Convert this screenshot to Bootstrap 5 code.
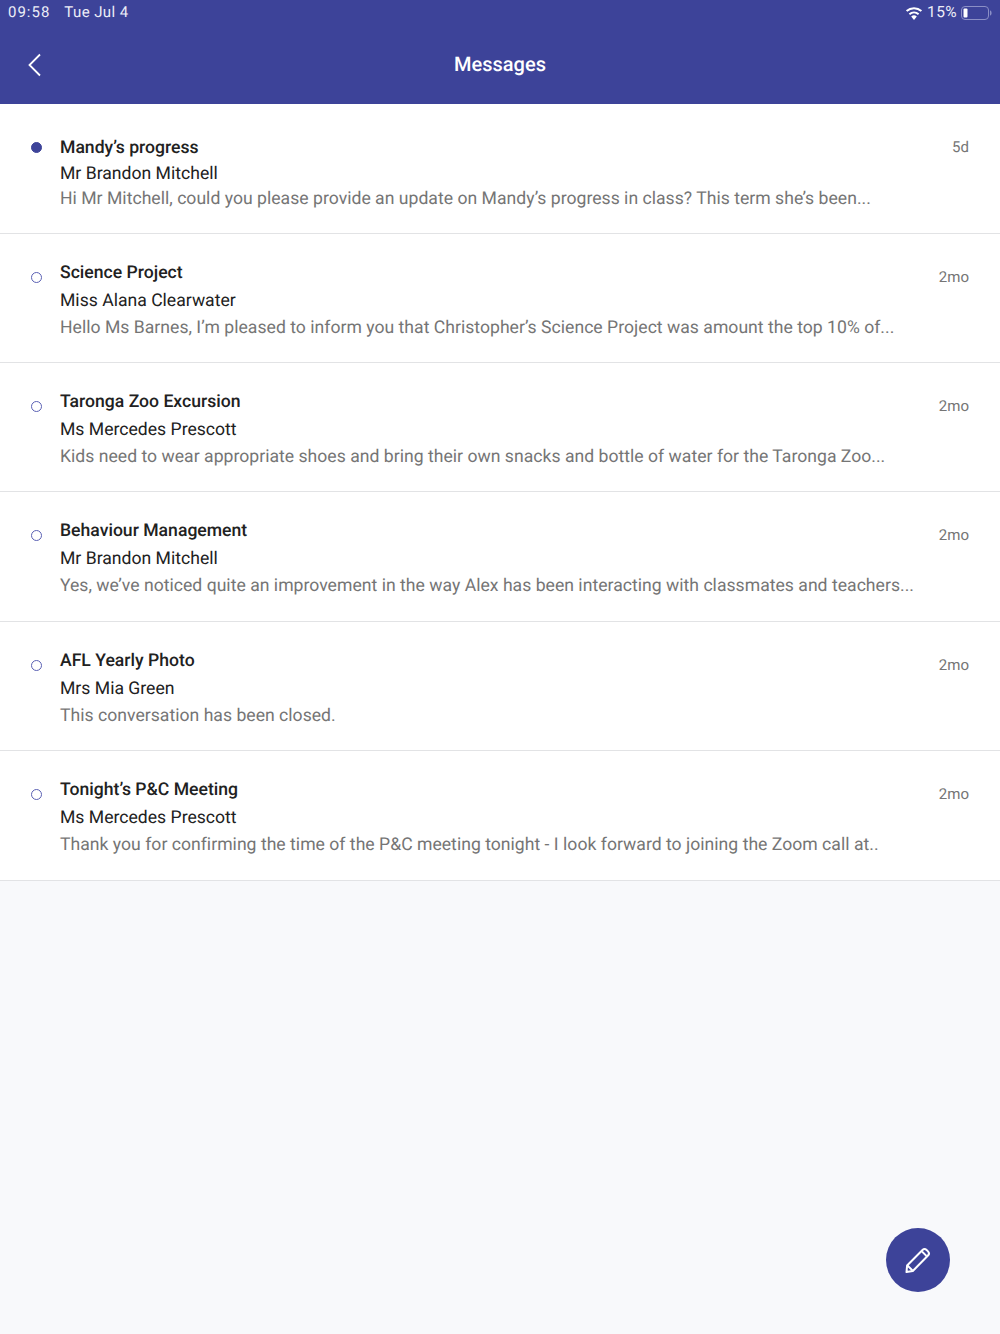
<!DOCTYPE html>
<html lang="en">
<head>
    <meta charset="UTF-8">
    <meta name="viewport" content="width=device-width, initial-scale=1.0">
    <title>Messages</title>
    <link href="https://cdn.jsdelivr.net/npm/bootstrap@5.3.0/dist/css/bootstrap.min.css" rel="stylesheet">
    <style>
        html, body { height: 100%; }
        body {
            background: #f8f9fb;
            font-family: Roboto, "Liberation Sans", sans-serif;
            text-rendering: geometricPrecision;
            overflow: hidden;
        }
        .app-top { background: #3d4399; height: 104px; color: #fff; }
        .status-line { height: 26px; padding: 0 8px 1px; font-size: 15px; letter-spacing: .4px; color: #ecedf7; }
        .status-line .clock { margin-right: 14px; letter-spacing: 1px; }
        .status-line .batt-text { font-size: 15.5px; }
        .title-line { height: 78px; }
        .title-line .back-btn { left: 26px; top: 50%; margin-top: -12px; line-height: 0; }
        .title-text { font-size: 20px; font-weight: 500; margin-bottom: 3px; }
        .msg-list { background: #fff; }
        .msg-row {
            background: #fff;
            border-bottom: 1px solid #e2e3e5;
            padding: 26px 31px 0 30px;
            height: 129px;
            font-size: 17.6px;
            color: #212121;
        }
        .msg-row:nth-child(4), .msg-row:nth-child(6) { height: 130px; }
        .msg-row.first-row { height: 130px; padding-top: 32px; }
        .msg-row.first-row .line-a, .msg-row.first-row .line-b, .msg-row.first-row .line-c { height: 25.5px; line-height: 25.5px; }
        .dot-col { width: 30px; flex: none; padding-top: 12px; }
        .msg-dot { display: block; width: 11px; height: 11px; border-radius: 50%; margin-left: .5px; border: 1.5px solid #5a60b4; }
        .msg-dot.unread { background: #3d4399; border-color: #3d4399; }
        .first-row .dot-col { padding-top: 6px; }
        .line-a { height: 27.5px; line-height: 27.5px; font-weight: 500; }
        .line-b { height: 27.5px; line-height: 27.5px; }
        .line-c { height: 27.5px; line-height: 27.5px; color: #757575; letter-spacing: .015px; }
        .msg-age { font-size: 15px; color: #757575; padding-top: 6px; }
        .first-row .msg-age { padding-top: 0; margin-top: -1px; line-height: 25px; }
        .fab-btn {
            position: fixed; left: 886px; top: 1228px;
            width: 64px; height: 64px; border-radius: 50%;
            background: #3d4399; border: 0; padding: 0;
        }
    </style>
</head>
<body>
<header class="app-top">
    <div class="status-line d-flex align-items-center justify-content-between">
        <div><span class="clock">09:58</span>Tue Jul 4</div>
        <div class="d-flex align-items-center gap-1">
            <svg width="18" height="14" viewBox="0 0 18 14"><path d="M9 14l-2.800-3.400a4.200 4.200 0 0 1 5.600 0z" fill="#fff"/><path d="M4.400 8.200a7 7 0 0 1 9.200 0M1.600 5a11 11 0 0 1 14.800 0" fill="none" stroke="#fff" stroke-width="2"/></svg>
            <span class="batt-text">15%</span>
            <svg width="31" height="14" viewBox="0 0 31 14"><rect x=".5" y=".5" width="27" height="13" rx="3.500" fill="none" stroke="#8b8fc6"/><rect x="2.500" y="2.500" width="4" height="9" rx="1" fill="#fff"/><path d="M29 4.500c1.300.3 1.600 1.400 1.600 2.500s-.3 2.200-1.600 2.500z" fill="#8b8fc6"/></svg>
        </div>
    </div>
    <div class="title-line position-relative d-flex align-items-center justify-content-center">
        <a class="back-btn position-absolute" href="#"><svg width="18" height="24" viewBox="0 0 18 24"><path d="M14 1.500L3.500 12L14 22.500" fill="none" stroke="#fff" stroke-width="1.800"/></svg></a>
        <div class="title-text">Messages</div>
    </div>
</header>
<main class="msg-list" id="msgList"></main>
<button class="fab-btn btn d-flex align-items-center justify-content-center" type="button">
    <svg width="28" height="28" viewBox="0 0 28 28"><path d="M2.500 26l.6-6.500L18.500 4a2.900 2.900 0 0 1 4.100 0l1.400 1.400a2.900 2.900 0 0 1 0 4.100L8.800 25z" fill="none" stroke="#fff" stroke-width="2" stroke-linejoin="round"/><path d="M3.500 19.500l5 5M18 5.500l4.500 4.500" fill="none" stroke="#fff" stroke-width="1.800"/></svg>
</button>
<script>
    const messages = [
        { title: "Mandy’s progress", from: "Mr Brandon Mitchell", text: "Hi Mr Mitchell, could you please provide an update on Mandy’s progress in class? This term she’s been...", age: "5d", unread: true },
        { title: "Science Project", from: "Miss Alana Clearwater", text: "Hello Ms Barnes, I’m pleased to inform you that Christopher’s Science Project was amount the top 10% of...", age: "2mo" },
        { title: "Taronga Zoo Excursion", from: "Ms Mercedes Prescott", text: "Kids need to wear appropriate shoes and bring their own snacks and bottle of water for the Taronga Zoo...", age: "2mo" },
        { title: "Behaviour Management", from: "Mr Brandon Mitchell", text: "Yes, we’ve noticed quite an improvement in the way Alex has been interacting with classmates and teachers...", age: "2mo" },
        { title: "AFL Yearly Photo", from: "Mrs Mia Green", text: "This conversation has been closed.", age: "2mo" },
        { title: "Tonight’s P&amp;C Meeting", from: "Ms Mercedes Prescott", text: "Thank you for confirming the time of the P&amp;C meeting tonight - I look forward to joining the Zoom call at..", age: "2mo" }
    ];
    document.getElementById("msgList").innerHTML = messages.map((m, i) => `
        <div class="msg-row d-flex ${i === 0 ? "first-row" : ""}">
            <div class="dot-col"><span class="msg-dot ${m.unread ? "unread" : ""}"></span></div>
            <div class="flex-grow-1">
                <div class="line-a">${m.title}</div>
                <div class="line-b">${m.from}</div>
                <div class="line-c">${m.text}</div>
            </div>
            <div class="msg-age">${m.age}</div>
        </div>`).join("");
</script>
</body>
</html>
